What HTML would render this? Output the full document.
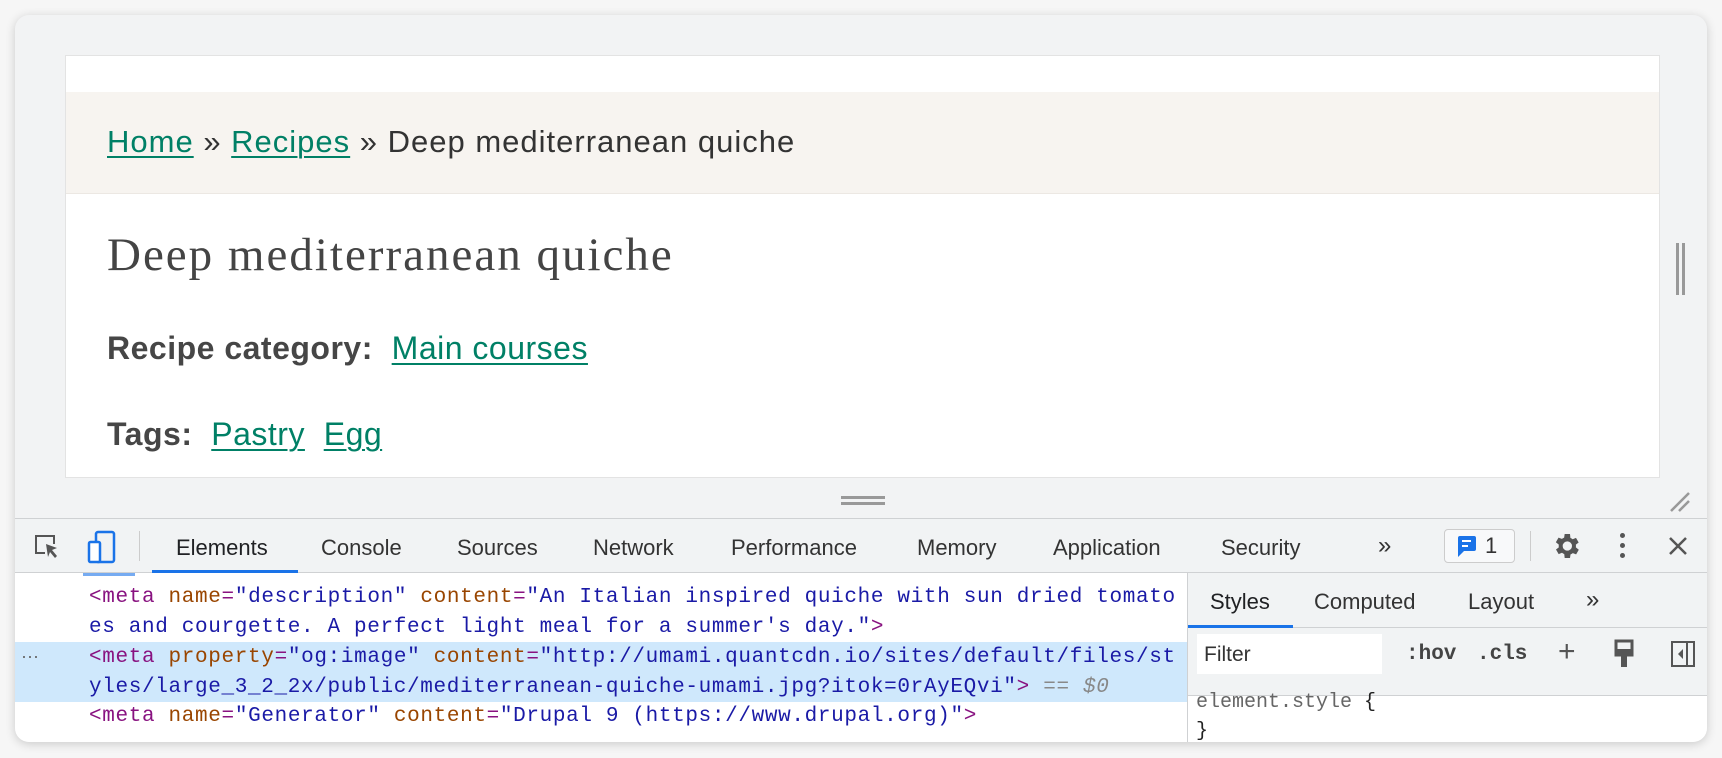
<!DOCTYPE html>
<html><head><meta charset="utf-8"><style>
*{margin:0;padding:0;box-sizing:border-box}
body{width:1722px;height:758px;background:#f6f6f6;position:relative;overflow:hidden;font-family:"Liberation Sans",sans-serif}
.abs{position:absolute}
#win{left:15px;top:15px;width:1692px;height:727px;border-radius:14px;background:#f2f3f4;box-shadow:0 2px 10px rgba(0,0,0,.18);overflow:hidden}
#vp{left:50px;top:40px;width:1595px;height:423px;background:#fff;border:1px solid #e3e3e3}
#bc{left:0;top:36px;width:100%;height:102px;background:#f7f4f0;border-bottom:1px solid #ece8e3}
.bct{left:41px;top:32px;font-size:31px;letter-spacing:1px;color:#333;white-space:nowrap}
a{color:#008066;text-decoration:underline;text-decoration-thickness:2px;text-underline-offset:4px}
.title{left:41px;top:172px;font-family:"Liberation Serif",serif;font-size:47px;letter-spacing:2px;color:#444}
.row{left:41px;font-size:32px;letter-spacing:0.5px;color:#444;white-space:nowrap}
.row b{color:#464646}
#tb{left:0;top:503px;width:100%;height:55px;border-top:1px solid #cfd1d3;border-bottom:1px solid #cfd1d3;background:#f1f3f4}
.tab{top:16px;font-size:22px;color:#333;white-space:nowrap}
#code{left:0;top:558px;width:1172px;height:169px;background:#fff}
.ln{left:74px;font-family:"Liberation Mono",monospace;font-size:21px;letter-spacing:0.65px;white-space:nowrap;color:#1a1aa6}
.tg{color:#881280}.at{color:#994500}.vl{color:#1a1aa6}
#side{left:1172px;top:558px;width:520px;height:169px;background:#fff;border-left:1px solid #cfd1d3}
</style></head><body>
<div id="win" class="abs">
 <div id="vp" class="abs">
  <div id="bc" class="abs"><div class="abs bct"><a>Home</a> » <a>Recipes</a> » Deep mediterranean quiche</div></div>
  <div class="abs title">Deep mediterranean quiche</div>
  <div class="abs row" style="top:274px"><b>Recipe category:</b>&nbsp; <a>Main courses</a></div>
  <div class="abs row" style="top:360px"><b>Tags:</b>&nbsp; <a>Pastry</a>&nbsp; <a>Egg</a></div>
  <div class="abs" style="left:1610px;top:187px;width:3px;height:52px;background:#999;box-shadow:6px 0 0 #999"></div>
 </div>
 <div class="abs" style="left:826px;top:481px;width:44px;height:3px;background:#999;box-shadow:0 6px 0 #999"></div>
 <svg class="abs" style="left:1652px;top:474px" width="24" height="24"><path d="M4 22L22 4M12 22L22 12" stroke="#999" stroke-width="2.5"/></svg>
 <div id="tb" class="abs">
  <svg class="abs" style="left:18px;top:14px" width="28" height="28"><path d="M12 20H3V3h18v8" fill="none" stroke="#555" stroke-width="2"/><path d="M13 11l11 4-5 2 5 6-2 2-5-6-2 5z" fill="#555"/></svg>
  <svg class="abs" style="left:72px;top:11px" width="30" height="34"><rect x="9" y="2" width="18" height="30" rx="2" fill="none" stroke="#1a73e8" stroke-width="2.5"/><rect x="2" y="12" width="11" height="20" rx="1.5" fill="#fff" stroke="#1a73e8" stroke-width="2.5"/></svg>
  <div class="abs" style="left:124px;top:12px;width:1px;height:30px;background:#ccc"></div>
  <div class="abs tab" style="left:161px;color:#202124">Elements</div>
  <div class="abs" style="left:137px;top:51px;width:146px;height:3px;background:#1a73e8"></div>
  <div class="abs tab" style="left:306px">Console</div>
  <div class="abs tab" style="left:442px">Sources</div>
  <div class="abs tab" style="left:578px">Network</div>
  <div class="abs tab" style="left:716px">Performance</div>
  <div class="abs tab" style="left:902px">Memory</div>
  <div class="abs tab" style="left:1038px">Application</div>
  <div class="abs tab" style="left:1206px">Security</div>
  <div class="abs tab" style="left:1363px;font-size:24px;top:13px">»</div>
  <div class="abs" style="left:1429px;top:10px;width:71px;height:34px;border:1px solid #ccc;border-radius:4px;background:#f8f9fa"></div>
  <svg class="abs" style="left:1441px;top:16px" width="22" height="24"><path d="M2 3a2 2 0 0 1 2-2h14a2 2 0 0 1 2 2v11a2 2 0 0 1-2 2H8l-6 6z" fill="#1a73e8"/><path d="M6 6h9M6 11h6" stroke="#fff" stroke-width="2"/></svg>
  <div class="abs tab" style="left:1470px;top:14px">1</div>
  <div class="abs" style="left:1515px;top:12px;width:1px;height:30px;background:#ccc"></div>
  <svg class="abs" style="left:1535px;top:11px" width="32" height="32" viewBox="0 0 24 24"><path fill="#555" d="M19.4 13a7.5 7.5 0 0 0 0-2l2.1-1.6-2-3.5-2.5 1a7 7 0 0 0-1.7-1L15 3h-4l-.4 2.7a7 7 0 0 0-1.7 1l-2.5-1-2 3.5L6.6 11a7.5 7.5 0 0 0 0 2l-2.1 1.6 2 3.5 2.5-1a7 7 0 0 0 1.7 1L11 21h4l.4-2.7a7 7 0 0 0 1.7-1l2.5 1 2-3.5zM13 15.5a3.5 3.5 0 1 1 0-7 3.5 3.5 0 0 1 0 7z"/></svg>
  <div class="abs" style="left:1605px;top:14px;width:5px;height:5px;border-radius:50%;background:#555;box-shadow:0 10px 0 #555,0 20px 0 #555"></div>
  <svg class="abs" style="left:1653px;top:17px" width="20" height="20"><path d="M2 2l16 16M18 2L2 18" stroke="#555" stroke-width="2.5"/></svg>
 </div>
 <div id="code" class="abs">
  <div class="abs" style="left:68px;top:0;width:52px;height:3px;background:#1a73e8;opacity:.6"></div>
  <div class="abs" style="left:0;top:69px;width:100%;height:60px;background:#cfe8fc"></div>
  <div class="abs ln" style="top:13px"><span class="tg">&lt;meta</span> <span class="at">name</span><span class="tg">=</span>"description" <span class="at">content</span><span class="tg">=</span>"An Italian inspired quiche with sun dried tomato</div>
  <div class="abs ln" style="top:43px">es and courgette. A perfect light meal for a summer's day."<span class="tg">&gt;</span></div>
  <div class="abs" style="left:6px;top:73px;font-size:18px;color:#666">···</div>
  <div class="abs ln" style="top:73px"><span class="tg">&lt;meta</span> <span class="at">property</span><span class="tg">=</span>"og:image" <span class="at">content</span><span class="tg">=</span>"http://umami.quantcdn.io/sites/default/files/st</div>
  <div class="abs ln" style="top:103px">yles/large_3_2_2x/public/mediterranean-quiche-umami.jpg?itok=0rAyEQvi"<span class="tg">&gt;</span> <span style="color:#888">== <i>$0</i></span></div>
  <div class="abs ln" style="top:132px"><span class="tg">&lt;meta</span> <span class="at">name</span><span class="tg">=</span>"Generator" <span class="at">content</span><span class="tg">=</span>"Drupal 9 (https://www.drupal.org)"<span class="tg">&gt;</span></div>
 </div>
 <div id="side" class="abs">
  <div class="abs" style="left:0;top:0;width:520px;height:55px;background:#f1f3f4;border-bottom:1px solid #cfd1d3"></div>
  <div class="abs tab" style="left:22px;top:16px;color:#202124">Styles</div>
  <div class="abs" style="left:0;top:52px;width:105px;height:3px;background:#1a73e8"></div>
  <div class="abs tab" style="left:126px;top:16px">Computed</div>
  <div class="abs tab" style="left:280px;top:16px">Layout</div>
  <div class="abs tab" style="left:398px;top:13px;font-size:24px">»</div>
  <div class="abs" style="left:0;top:55px;width:520px;height:68px;background:#f1f3f4;border-bottom:1px solid #cfd1d3"></div>
  <div class="abs" style="left:9px;top:61px;width:185px;height:40px;background:#fff"></div>
  <div class="abs" style="left:16px;top:70px;font-size:21px;color:#333">Filter</div>
  <div class="abs" style="left:218px;top:70px;font-family:'Liberation Mono',monospace;font-size:21px;font-weight:bold;color:#444">:hov</div>
  <div class="abs" style="left:289px;top:70px;font-family:'Liberation Mono',monospace;font-size:21px;font-weight:bold;color:#444">.cls</div>
  <div class="abs" style="left:370px;top:62px;font-size:30px;color:#555">+</div>
  <svg class="abs" style="left:426px;top:66px" width="20" height="32"><rect x="2" y="2" width="16" height="14" fill="none" stroke="#555" stroke-width="3"/><rect x="2" y="10" width="16" height="6" fill="#555"/><rect x="7" y="16" width="6" height="12" fill="#555"/></svg>
  <svg class="abs" style="left:482px;top:67px" width="26" height="28"><rect x="2" y="2" width="22" height="24" fill="none" stroke="#555" stroke-width="2"/><path d="M17 2v24" stroke="#555" stroke-width="2"/><path d="M13 9l-5 5 5 5z" fill="#555"/></svg>
  <div class="abs" style="left:8px;top:118px;font-family:'Liberation Mono',monospace;font-size:20px;color:#666">element.style <span style="color:#222">{</span></div>
  <div class="abs" style="left:8px;top:147px;font-family:'Liberation Mono',monospace;font-size:20px;color:#222">}</div>
 </div>
</div>
</body></html>
